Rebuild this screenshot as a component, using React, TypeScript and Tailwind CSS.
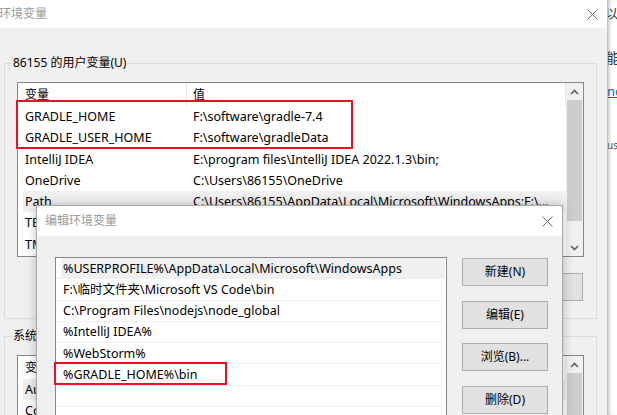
import React from "react";

const F = "font-['Noto_Sans','Noto_Sans_CJK_SC',sans-serif]";

function Chevron({ up }: { up: boolean }) {
  return (
    <svg width="9" height="6" viewBox="0 0 9 6">
      <polyline
        points={up ? "1,5 4.5,1.5 8,5" : "1,1 4.5,4.5 8,1"}
        fill="none"
        stroke="#606060"
        strokeWidth="1.6"
      />
    </svg>
  );
}

function CloseX() {
  return (
    <svg width="11" height="11" viewBox="0 0 11 11">
      <path d="M0.5 0.5 L10.5 10.5 M10.5 0.5 L0.5 10.5" stroke="#6a6a6a" strokeWidth="1" />
    </svg>
  );
}

function ScrollBar({ thumb, down = true }: { thumb: string; down?: boolean }) {
  return (
    <div className="w-[17px] shrink-0 bg-[#f0f0f0] flex flex-col">
      <div className="h-[17px] shrink-0 flex items-center justify-center">
        <Chevron up />
      </div>
      <div className={`mx-[1px] shrink-0 bg-[#cdcdcd] ${thumb}`} />
      <div className="flex-1" />
      {down && (
        <div className="h-[17px] shrink-0 flex items-center justify-center">
          <Chevron up={false} />
        </div>
      )}
    </div>
  );
}

type Row = { k: string; v: string; sel?: boolean };

function VarList({ rows, height, thumb, down }: { rows: Row[]; height: string; thumb: string; down?: boolean }) {
  return (
    <div className={`${height} border border-[#828790] bg-white flex overflow-hidden`}>
      <div className="flex-1 flex flex-col overflow-hidden">
        <div className="h-[23px] shrink-0 flex">
          <div className="w-[169px] pl-[7px] flex items-center border-r border-[#e5e5e5]">变量</div>
          <div className="flex-1 pl-[6px] flex items-center border-r border-[#e5e5e5]">值</div>
        </div>
        {rows.map((r, i) => (
          <div
            key={i}
            className={`h-[21.25px] shrink-0 ml-[5px] pt-[1px] flex items-center whitespace-nowrap text-[12.5px] ${r.sel ? "bg-[#f0f0f0]" : ""}`}
          >
            <div className="w-[170px] shrink-0 pl-[2px]">{r.k}</div>
            <div className="flex-1">{r.v}</div>
          </div>
        ))}
      </div>
      <ScrollBar thumb={thumb} down={down} />
    </div>
  );
}

function WinButton({ label, className = "" }: { label: string; className?: string }) {
  return (
    <div
      className={`h-[28px] w-[86px] shrink-0 border border-[#adadad] bg-[#e1e1e1] flex items-center justify-center ${className}`}
    >
      {label}
    </div>
  );
}

const userRows: Row[] = [
  { k: "GRADLE_HOME", v: "F:\\software\\gradle-7.4" },
  { k: "GRADLE_USER_HOME", v: "F:\\software\\gradleData" },
  { k: "IntelliJ IDEA", v: "E:\\program files\\IntelliJ IDEA 2022.1.3\\bin;" },
  { k: "OneDrive", v: "C:\\Users\\86155\\OneDrive" },
  { k: "Path", v: "C:\\Users\\86155\\AppData\\Local\\Microsoft\\WindowsApps;F:\\...", sel: true },
  { k: "TEMP", v: "%USERPROFILE%\\AppData\\Local\\Temp" },
  { k: "TMP", v: "%USERPROFILE%\\AppData\\Local\\Temp" },
];

const sysRows: Row[] = [
  { k: "AutoCAD", v: "C:\\Program Files\\Autodesk", sel: true },
  { k: "ComSpec", v: "C:\\Windows\\system32\\cmd.exe" },
];

const pathRows = [
  { t: "%USERPROFILE%\\AppData\\Local\\Microsoft\\WindowsApps", sel: true },
  { t: "F:\\临时文件夹\\Microsoft VS Code\\bin" },
  { t: "C:\\Program Files\\nodejs\\node_global" },
  { t: "%IntelliJ IDEA%" },
  { t: "%WebStorm%" },
  { t: "%GRADLE_HOME%\\bin" },
  { t: "" },
  { t: "" },
];

export default function App() {
  return (
    <div className={`${F} relative w-[617px] h-[415px] overflow-hidden bg-white text-[12px] leading-[16px] text-black flex`}>
      {/* Outer dialog */}
      <div className="w-[607px] h-[415px] shrink-0 flex flex-col">
        <div className="h-[28px] shrink-0 bg-white flex items-center justify-between pr-[9px]">
          <span className="-ml-[1px] text-[#9a9a9a]">环境变量</span>
          <CloseX />
        </div>
        <div className="flex-1 bg-[#f0f0f0] pl-[4px] pr-[10px] pt-[35px]">
          {/* user group */}
          <div className="relative h-[256px] border border-[#dcdcdc] px-[12px] pt-[18px]">
            <span className="absolute left-[7px] -top-[9px] px-[1px] bg-[#f0f0f0]">86155 的用户变量(U)</span>
            <VarList rows={userRows} height="h-[175px]" thumb="h-[121px]" />
            <div className="mt-[16px] flex justify-end gap-[10px] pr-[1px]">
              <WinButton label="新建(N)..." />
              <WinButton label="编辑(E)..." />
              <WinButton label="删除(D)" />
            </div>
          </div>
          {/* system group */}
          <div className="relative mt-[17px] h-[120px] border border-[#dcdcdc] px-[12px] pt-[18px]">
            <span className="absolute left-[7px] -top-[9px] px-[1px] bg-[#f0f0f0]">系统变量(S)</span>
            <VarList rows={sysRows} height="h-[90px]" thumb="h-[60px]" down={false} />
          </div>
        </div>
      </div>

      {/* Window behind on the right */}
      <div className="flex-1 relative bg-white shadow-[inset_3px_0_3px_-1px_rgba(0,0,0,0.18)] border-l border-[#c4c4c4] overflow-hidden">
        <div className="flex flex-col whitespace-nowrap text-[#333]">
          <span className="mt-[5px] -ml-[3px] text-[13px] leading-[16px]">以</span>
          <span className="mt-[28px] -ml-[2px] text-[14px] leading-[18px]">能</span>
          <span className="mt-[16px] -ml-[1px] text-[13px] leading-[16px] text-[#0066b4] underline">nc</span>
          <span className="mt-[40px] -ml-[1px] text-[10px] leading-[12px] text-[#555]">us</span>
        </div>
      </div>

      {/* Edit dialog on top */}
      <div className="absolute left-[36px] top-[205px] w-[527px] h-[215px] border border-[#a8a8a8] shadow-[0_0_10px_rgba(0,0,0,0.25)] flex flex-col bg-[#f0f0f0]">
        <div className="h-[30px] shrink-0 bg-white flex items-center justify-between pl-[8px] pr-[9px]">
          <span className="text-[#9a9a9a]">编辑环境变量</span>
          <CloseX />
        </div>
        <div className="flex pl-[18px] pt-[21px] gap-[15px]">
          <div className="w-[392px] h-[170px] border border-[#828790] bg-white flex flex-col overflow-hidden">
            {pathRows.map((r, i) => (
              <div key={i} className="h-[21.25px] shrink-0 mx-[1px] border-b border-[#f0f0f0]">
                <div
                  className={`h-full ml-[4px] pl-[2px] pt-[1px] flex items-center whitespace-nowrap text-[12.5px] ${r.sel ? "bg-[#f0f0f0]" : ""}`}
                >
                  {r.t}
                </div>
              </div>
            ))}
          </div>
          <div className="flex flex-col gap-[14.67px] pt-[1px]">
            <WinButton label="新建(N)" />
            <WinButton label="编辑(E)" />
            <WinButton label="浏览(B)..." />
            <WinButton label="删除(D)" />
          </div>
        </div>
      </div>

      {/* annotation boxes */}
      <div className="absolute left-[16px] top-[100px] w-[337px] h-[49px] border-2 border-[#e81123]" />
      <div className="absolute left-[54px] top-[362px] w-[173px] h-[23px] border-2 border-[#e81123]" />
    </div>
  );
}
